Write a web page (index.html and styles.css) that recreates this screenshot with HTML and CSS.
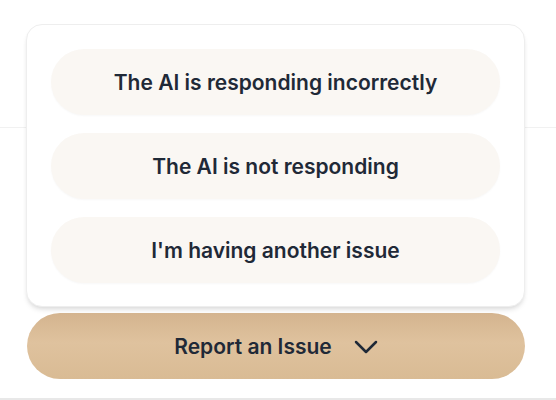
FILE: index.html
```html
<!DOCTYPE html>
<html>
<head>
<meta charset="utf-8">
<link rel="stylesheet" href="styles.css">
</head>
<body>
<div class="stage">
  <div class="divider divider-mid"></div>
  <div class="widget">
    <div class="menu">
      <button class="option">The AI is responding incorrectly</button>
      <button class="option">The AI is not responding</button>
      <button class="option">I'm having another issue</button>
    </div>
    <button class="report">
      <span>Report an Issue</span>
      <svg class="chev" width="24" height="14" viewBox="0 0 24 14" fill="none" stroke="#1f2937" stroke-width="2.5" stroke-linecap="round" stroke-linejoin="round"><path d="M2 2l10 10 10-10"/></svg>
    </button>
  </div>
  <div class="divider divider-bottom"></div>
</div>
</body>
</html>
```
FILE: styles.css
```css
* { box-sizing: border-box; }
html, body { margin: 0; padding: 0; background: #fff; }
body { font-family: Inter, "Noto Sans", sans-serif; }
.stage { position: relative; width: 556px; height: 400px; }
.divider { position: absolute; left: 0; right: 0; height: 1px; background: #f1f1f1; }
.divider-mid { top: 127px; }
.divider-bottom { top: 398px; height: 2px; background: #e8e8e8; }
.widget {
  position: relative;
  padding: 24px 31px 0 26px;
  display: flex;
  flex-direction: column;
  gap: 6px;
}
.menu {
  background: #fff;
  border: 1px solid #eeeeee;
  border-radius: 16px;
  padding: 24px 24px 23px;
  display: flex;
  flex-direction: column;
  gap: 18px;
  box-shadow: 0 4px 5px -1px rgba(0,0,0,0.10), 0 2px 4px -2px rgba(0,0,0,0.08);
}
.option {
  height: 66px;
  border: none;
  border-radius: 33px;
  background: #faf7f3;
  font-family: Inter, "Noto Sans", sans-serif;
  font-weight: 600;
  font-size: 21px;
  color: #1f2937;
  box-shadow: 0 1px 2px rgba(0,0,0,0.03);
}
.report {
  margin-left: 1px;
  height: 66px;
  border: none;
  border-radius: 33px;
  background: linear-gradient(180deg, #d4b48f 0%, #dfc29e 45%, #d9bb94 100%);
  font-family: Inter, "Noto Sans", sans-serif;
  font-weight: 600;
  font-size: 21px;
  color: #1f2937;
  display: flex;
  align-items: center;
  justify-content: center;
  gap: 22px;
  padding: 0 0 0 0;
}
.chev { display: block; margin-top: 2px; }
```
